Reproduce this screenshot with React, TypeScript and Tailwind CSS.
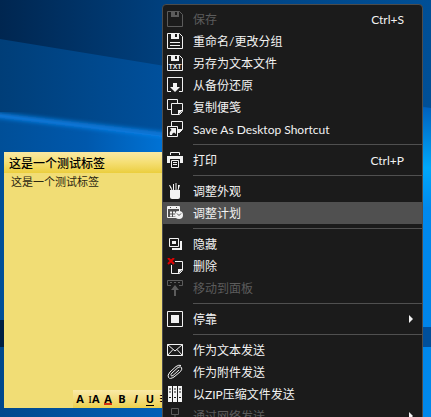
import React from 'react';
import clsx from 'clsx';

interface IconProps {
  children: React.ReactNode;
}

const Icon: React.FC<IconProps> = ({ children }) => (
  <svg width="16" height="16" viewBox="0 0 16 16" fill="none" stroke="currentColor" aria-hidden="true" className="shrink-0">
    {children}
  </svg>
);

// Floppy outline shared by the save icons
const Floppy = () => (
  <>
    <path d="M.5 .5H12.5L15.5 3.5V15.5H.5Z" />
    <path d="M4 0H12V6H4ZM8 1V4H10V1Z" fill="currentColor" fillRule="evenodd" stroke="none" />
  </>
);

const icons = {
  save: <Icon><Floppy /></Icon>,
  rename: <Icon><Floppy /><path d="M3 9.5H13M3 12.5H13" /></Icon>,
  saveText: (
    <Icon>
      <Floppy />
      <text x="8" y="14" textAnchor="middle" fill="currentColor" stroke="none" className="font-['Liberation_Sans'] text-[7px] font-bold">TXT</text>
    </Icon>
  ),
  restore: (
    <Icon>
      <path d="M4 14.5H.5V.5H15.5V14.5H12" />
      <path d="M6 6H10V10H13L8 15L3 10H6Z" fill="currentColor" stroke="none" />
    </Icon>
  ),
  copy: (
    <Icon>
      <path d="M4.5 10.5H.5V.5H10.5V4" />
      <path d="M4.5 4.5H15.5V12.5L12.5 15.5H4.5Z" />
      <path d="M11 15V11H15V12L12 15Z" fill="currentColor" stroke="none" />
    </Icon>
  ),
  shortcut: (
    <Icon>
      <path d="M4.5 5V.5H15.5V8.5L12.5 11.5H11" />
      <path d="M11 11V8H15V9L12 12Z" fill="currentColor" stroke="none" />
      <path d="M.5 5.5H10.5V15.5H.5Z" />
      <path d="M3 7H9V13L7 11.500Q5 12 5 14H3Q2 11 4.500 9Z" fill="currentColor" stroke="none" />
    </Icon>
  ),
  print: (
    <Icon>
      <path d="M3.5 3V.5H12.5V3" />
      <path d="M0 4H16V11H13V7H3V11H0Z" fill="currentColor" stroke="none" />
      <path d="M4.5 8.5H11.5V15.5H4.5ZM6 10.5H10M6 12.5H10" />
    </Icon>
  ),
  look: (
    <Icon>
      <path d="M3 7H13V14Q13 16 11 16H5Q3 16 3 14Z" fill="currentColor" stroke="none" />
      <path d="M3 3.500L5 7M12.500 2L11 7" />
      <path d="M6.500 1V7M9 0V7" strokeWidth="1" />
      <path d="M2.500 2L4.500 5.500M11.500 2V6" />
    </Icon>
  ),
  schedule: (
    <Icon>
      <path d="M.5 1.500H12.500V12.500H.5Z" />
      <path d="M1 2H12V4H1Z" fill="currentColor" stroke="none" />
      <path d="M3 7.5H5M6 7.5H8M3 10.5H5M6 10.5H8M9 7.500H11" strokeWidth="2" />
      <path d="M3 2.5H4M9 2.5H10" stroke="#505050" />
      <circle cx="12" cy="10" r="4" fill="currentColor" stroke="none" />
      <path d="M10 8.5L12 10.5L14 8.5" stroke="#505050" />
    </Icon>
  ),
  hide: (
    <Icon>
      <path d="M2.5 2.5H11.5V10.5H2.5Z" />
      <path d="M5 5H9V8H5Z" fill="currentColor" stroke="none" />
      <path d="M5 13H14V5" strokeWidth="2" />
    </Icon>
  ),
  remove: (
    <Icon>
      <path d="M8 3.5H15.5V12.5L12.5 15.5H4.5V7" />
      <path d="M11 15V11H15V12L12 15Z" fill="currentColor" stroke="none" />
      <path d="M1 0L7 6M7 0L1 6" stroke="#e00000" strokeWidth="2" />
    </Icon>
  ),
  toPanel: (
    <Icon>
      <path d="M4 5.5H.5V.5H15.5V5.5H12M3 2.5H5M7 2.5H9M11 2.5H13" />
      <path d="M8 8V16" strokeWidth="2" />
      <path d="M8 5L12 10H4Z" fill="currentColor" stroke="none" />
    </Icon>
  ),
  dock: (
    <Icon>
      <path d="M.5 .5H15.5V15.5H.5Z" />
      <path d="M4 4H12V12H4Z" fill="currentColor" stroke="none" />
    </Icon>
  ),
  mail: (
    <Icon>
      <path d="M.5 2.5H15.5V13.5H.5ZM.5 2.5L8 9L15.5 2.5M.5 13.5L6 7.5M15.5 13.5L10 7.5" />
    </Icon>
  ),
  attach: (
    <Icon>
      <path d="M12 6L6 11.500Q4.500 12.500 4 11.500Q3.500 10.500 5 9L11 3.500Q13.500 2 14.500 3.500Q15.500 5 13.500 7.500L7 13Q3 15.500 1.500 13.500Q0 11.500 3 8L9 2.500Q12 .5 14 1.500" />
    </Icon>
  ),
  zip: (
    <Icon>
      <path d="M1 0H5V16H1ZM6 0H10V16H6ZM11 0H15V16H11Z" fill="currentColor" stroke="none" />
      <path d="M3 2V7M8 2V7M13 2V7" stroke="#1b1b1b" strokeDasharray="2 1" />
      <path d="M2 11.500H4M7 11.500H9M12 11.500H14" stroke="#1b1b1b" strokeWidth="1" />
    </Icon>
  ),
  network: (
    <Icon>
      <path d="M4.500 .5H11.500V6.500H4.500ZM8 7V10M2.500 13V10.500H13.500V13M.5 12.500H5.500V15.500H.5ZM10.500 12.500H15.500V15.500H10.500Z" />
    </Icon>
  ),
};

interface Entry {
  icon: keyof typeof icons;
  label: string;
  shortcut?: string;
  disabled?: boolean;
  active?: boolean;
  submenu?: boolean;
}

const groups: Entry[][] = [
  [
    { icon: 'save', label: '保存', shortcut: 'Ctrl+S', disabled: true },
    { icon: 'rename', label: '重命名/更改分组' },
    { icon: 'saveText', label: '另存为文本文件' },
    { icon: 'restore', label: '从备份还原' },
    { icon: 'copy', label: '复制便笺' },
    { icon: 'shortcut', label: 'Save As Desktop Shortcut' },
  ],
  [{ icon: 'print', label: '打印', shortcut: 'Ctrl+P' }],
  [
    { icon: 'look', label: '调整外观' },
    { icon: 'schedule', label: '调整计划', active: true },
  ],
  [
    { icon: 'hide', label: '隐藏' },
    { icon: 'remove', label: '删除' },
    { icon: 'toPanel', label: '移动到面板', disabled: true },
  ],
  [{ icon: 'dock', label: '停靠', submenu: true }],
  [
    { icon: 'mail', label: '作为文本发送' },
    { icon: 'attach', label: '作为附件发送' },
    { icon: 'zip', label: '以ZIP压缩文件发送' },
    { icon: 'network', label: '通过网络发送', disabled: true, submenu: true },
  ],
];

const MenuItem: React.FC<{ entry: Entry }> = ({ entry }) => (
  <button
    type="button"
    role="menuitem"
    disabled={entry.disabled}
    className={clsx(
      'flex h-[22px] w-full items-center pl-1 pr-2 text-left',
      entry.active ? 'bg-[#505050]' : 'hover:bg-[#505050]',
      entry.disabled ? 'text-[#5c5c5c]' : 'text-[#f2f2f2]'
    )}
  >
    {icons[entry.icon]}
    <span className="ml-2.5 flex-1 whitespace-nowrap pt-0.5">{entry.label}</span>
    {entry.shortcut && <span className="pr-2.5 pt-0.5 text-[#f2f2f2]">{entry.shortcut}</span>}
    {entry.submenu && (
      <svg width="6" height="8" viewBox="0 0 6 8" fill="#f2f2f2" aria-hidden="true">
        <path d="M1 0L5 4L1 8Z" />
      </svg>
    )}
  </button>
);

const ContextMenu = () => (
  <div
    role="menu"
    className="absolute left-[162px] top-1 w-[261px] rounded-t border border-[#4c4c4c] bg-[#1b1b1b] py-[3px] font-['Lato','Noto_Sans_CJK_SC',sans-serif] text-xs leading-4"
  >
    {groups.map((group, idx) => (
      <React.Fragment key={idx}>
        {idx > 0 && <div role="separator" className="my-1 ml-[30px] h-px bg-[#505050]" />}
        {group.map((entry) => (
          <MenuItem key={entry.label} entry={entry} />
        ))}
      </React.Fragment>
    ))}
  </div>
);

const tools = [
  { name: 'Font', mark: 'A' },
  { name: 'Font size', mark: <><span className="font-['Liberation_Serif'] font-normal">I</span>A</> },
  { name: 'Colour', mark: <span className="border-b-2 border-[#d03010] leading-[9px]">A</span> },
  { name: 'Bold', mark: 'B' },
  { name: 'Italic', mark: <i>I</i> },
  { name: 'Underline', mark: <span className="border-b border-black leading-3">U</span> },
  { name: 'List', mark: '≡' },
];

const Note = () => (
  <section className="absolute bottom-[9px] left-1 top-[152px] flex w-[180px] flex-col bg-[#f1dd75] text-black">
    <h1 className="h-[21px] bg-linear-to-b from-[#fae9a4] via-[#f5df73] to-[#ebce3c] pl-[5px] pt-0.5 text-xs font-medium leading-5">
      这是一个测试标签
    </h1>
    <p className="flex-1 pl-[7px] text-[11px] leading-[18px] text-[#2c2812]">这是一个测试标签</p>
    <div className="ml-[69px] flex h-[18px] items-center bg-linear-to-b from-[#faeaa6] to-[#ecd04a]">
      {tools.map((tool) => (
        <button
          key={tool.name}
          type="button"
          aria-label={tool.name}
          className="flex h-4 w-3.5 shrink-0 items-center justify-center text-[11px] font-bold leading-4"
        >
          {tool.mark}
        </button>
      ))}
    </div>
  </section>
);

const Wallpaper = () => (
  <svg className="absolute inset-0 h-full w-full" viewBox="0 0 431 417" preserveAspectRatio="none" aria-hidden="true">
    <defs>
      <linearGradient id="sky" x1="0" y1="0" x2="1" y2="0">
        <stop offset="0" stopColor="#002650" />
        <stop offset=".38" stopColor="#00407e" />
        <stop offset="1" stopColor="#004f96" />
      </linearGradient>
      <linearGradient id="beam" x1="0" y1="0" x2="1" y2="0">
        <stop offset="0" stopColor="#003e78" />
        <stop offset=".38" stopColor="#00509c" />
        <stop offset="1" stopColor="#0060b8" />
      </linearGradient>
      <linearGradient id="lower" x1="0" y1="0" x2="1" y2="0">
        <stop offset="0" stopColor="#004f98" />
        <stop offset=".2" stopColor="#0058ac" />
        <stop offset=".38" stopColor="#0073d6" />
        <stop offset="1" stopColor="#0088f0" />
      </linearGradient>
      <linearGradient id="edge" x1="0" y1="0" x2="0" y2="1">
        <stop offset="0" stopColor="#0062be" />
        <stop offset=".27" stopColor="#00a8fa" />
        <stop offset=".45" stopColor="#0089ee" />
        <stop offset="1" stopColor="#0084e8" />
      </linearGradient>
      <linearGradient id="floor" x1="0" y1="0" x2="1" y2="0">
        <stop offset="0" stopColor="#00488c" />
        <stop offset=".38" stopColor="#0060b8" />
        <stop offset="1" stopColor="#0088ec" />
      </linearGradient>
      <filter id="soft"><feGaussianBlur stdDeviation="2" /></filter>
    </defs>
    <path d="M0 0H431V417H0Z" fill="url(#sky)" />
    <path d="M0 39L165 66L431 108V417H0Z" fill="url(#beam)" />
    <path d="M0 115L165 136L431 165V417H0Z" fill="url(#lower)" />
    <path d="M-5 115L175 136" stroke="#0a80e6" strokeWidth="5" filter="url(#soft)" />
    <path d="M420 108H431V330H420Z" fill="url(#edge)" />
    <path d="M0 320H40V348H0Z" fill="#001f42" />
    <path d="M420 327H431V347H420Z" fill="#004f9a" />
    <path d="M0 347H431V417H0Z" fill="url(#floor)" />
  </svg>
);

export default function App() {
  return (
    <main className="relative h-screen overflow-hidden bg-[#00407e] font-['Open_Sans','Noto_Sans_CJK_SC',sans-serif]">
      <Wallpaper />
      <Note />
      <ContextMenu />
    </main>
  );
}
